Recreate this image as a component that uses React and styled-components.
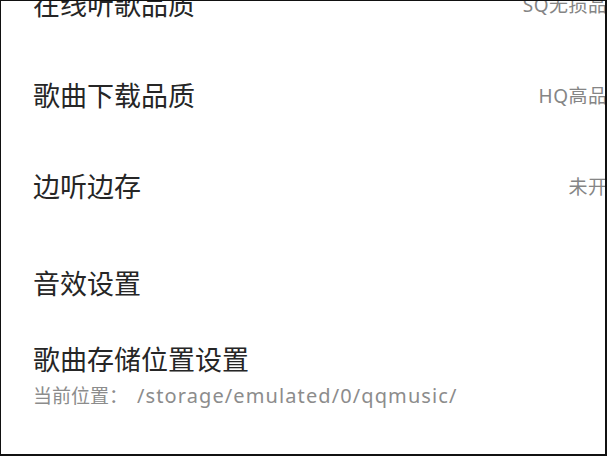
import styled, { createGlobalStyle } from 'styled-components';

const GlobalStyle = createGlobalStyle`
  html, body {
    margin: 0;
    padding: 0;
    background: #fff;
  }
  body {
    font-family: "Noto Sans", "Noto Sans CJK SC", sans-serif;
  }
`;

const Screen = styled.div`
  box-sizing: border-box;
  width: 607px;
  height: 456px;
  overflow: hidden;
  background: #fff;
  border-style: solid;
  border-color: #111;
  border-width: 1px 2px 2px 1px;
`;

// rows run a little past the right edge, so the values are clipped
const List = styled.div`
  display: flex;
  flex-direction: column;
  margin-top: -43px;
  width: 626px;
`;

const Row = styled.div`
  display: flex;
  align-items: center;
  justify-content: space-between;
  height: ${(p) => p.$height}px;
  padding-left: 32px;
`;

const Label = styled.div`
  font-family: "Noto Sans CJK SC", sans-serif;
  font-size: 27px;
  line-height: 30px;
  color: #262626;
`;

const Value = styled.div`
  font-size: 19px;
  letter-spacing: 0.5px;
  color: #858585;
`;

const Block = styled.div`
  display: flex;
  flex-direction: column;
  padding: 11px 0 0 32px;
`;

const Hint = styled.div`
  margin-top: 10px;
  font-size: 19px;
  line-height: 24px;
  color: #8c8c8c;
  white-space: nowrap;
`;

const Path = styled.span`
  margin-left: 9px;
  font-size: 20px;
  letter-spacing: 1.1px;
`;

const settings = [
  { label: '在线听歌品质', value: 'SQ无损品质', height: 91 },
  { label: '歌曲下载品质', value: 'HQ高品质', height: 91 },
  { label: '边听边存', value: '未开启', height: 92 },
  { label: '音效设置', value: '', height: 101 },
];

export default function App() {
  return (
    <>
      <GlobalStyle />
      <Screen>
        <List>
          {settings.map((s) => (
            <Row key={s.label} $height={s.height}>
              <Label>{s.label}</Label>
              {s.value && <Value>{s.value}</Value>}
            </Row>
          ))}
          <Block>
            <Label>歌曲存储位置设置</Label>
            <Hint>
              当前位置：<Path>/storage/emulated/0/qqmusic/</Path>
            </Hint>
          </Block>
        </List>
      </Screen>
    </>
  );
}
